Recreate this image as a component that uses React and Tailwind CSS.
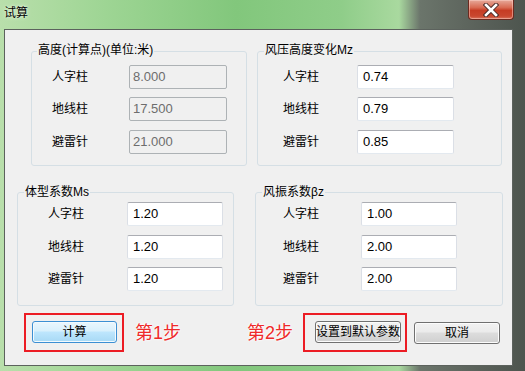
import React from "react";

const font = "font-['Liberation_Sans','Noto_Sans_CJK_SC',sans-serif]";

function Field({ label, value, labelW, inputW, disabled, mt }) {
  return (
    <div className={`flex items-center ${mt}`}>
      <div className={`${labelW} text-[12px] leading-[14px] text-black`}>{label}</div>
      <div
        className={
          disabled
            ? `${inputW} h-[24px] flex items-center pl-[3px] rounded-[2px] border border-[#adb2b5] bg-[#f0f0f0] text-[13px] text-[#6d6d6d]`
            : `${inputW} h-[24px] flex items-center pl-[5px] rounded-[2px] border border-[#dbdfe6] border-t-[#abadb3] border-b-[#e3e9ef] bg-white text-[13px] text-black`
        }
      >
        {value}
      </div>
    </div>
  );
}

function Group({ title, w, h, pl, pt, labelW, inputW, values, disabled, titleTop, titleLeft, gaps }) {
  const labels = ["人字柱", "地线柱", "避雷针"];
  return (
    <div className={`relative ${w} ${h} ${pl} ${pt} border border-[#d5dfe5] rounded-[3px] shrink-0`}>
      <div className={`absolute ${titleTop} ${titleLeft} px-[1px] bg-[#f0f0f0] text-[12px] leading-[14px] text-black whitespace-nowrap`}>
        {title}
      </div>
      {labels.map((l, i) => (
        <Field
          key={l}
          label={l}
          value={values[i]}
          labelW={labelW}
          inputW={inputW}
          disabled={disabled}
          mt={gaps[i]}
        />
      ))}
    </div>
  );
}

function WinButton({ children, blue, w }) {
  return (
    <div
      className={
        blue
          ? `${w} h-[22px] shrink-0 flex items-center justify-center rounded-[3px] border border-[#3c8fd3] bg-[linear-gradient(to_bottom,#eaf6fd_0%,#d9f0fc_45%,#bee6fd_50%,#a7d9f5_100%)] shadow-[inset_0_0_0_1px_#f3fafe] text-[12px] text-black`
          : `${w} h-[22px] shrink-0 flex items-center justify-center rounded-[3px] border border-[#707070] bg-[linear-gradient(to_bottom,#f2f2f2_0%,#ebebeb_45%,#dddddd_50%,#cfcfcf_100%)] shadow-[inset_0_0_0_1px_#fcfcfc] text-[12px] text-black whitespace-nowrap`
      }
    >
      {children}
    </div>
  );
}

export default function App() {
  return (
    <div
      className={`${font} w-[525px] h-[371px] overflow-hidden flex flex-col bg-[linear-gradient(to_right,#b9dfab_0%,#9ed594_20%,#82c77c_45%,#8fcd89_65%,#a9d99f_76%,#6b756b_80%,#596059_92%,#4d554e_100%)]`}
    >
      {/* title bar */}
      <div className="h-[29px] flex items-start shrink-0">
        <div className="pl-[4px] pt-[6px] text-[12px] leading-[14px] text-black [text-shadow:0_0_4px_#e6f5e0,0_0_2px_#e6f5e0]">
          试算
        </div>
        <div className="ml-auto mr-[11px] w-[46px] h-[20px] rounded-b-[4px] border border-t-0 border-[#6b2a20] bg-[linear-gradient(to_bottom,#e7a99a_0%,#d86a52_40%,#c63c24_55%,#c9472f_85%,#d9745e_100%)] flex items-center justify-center shadow-[inset_0_0_0_1px_rgba(255,220,210,0.45)]">
          <svg width="16" height="14" viewBox="0 0 16 14">
            <path d="M3 2 L13 12 M13 2 L3 12" stroke="#4a2a28" strokeWidth="4.5" strokeLinecap="square" fill="none" />
            <path d="M3 2 L13 12 M13 2 L3 12" stroke="#ffffff" strokeWidth="2.6" strokeLinecap="square" fill="none" />
          </svg>
        </div>
      </div>

      {/* client area */}
      <div className="ml-[4px] w-[509px] h-[337px] border border-[#5c625d] bg-[#f0f0f0] flex flex-col shrink-0">
        {/* row 1 */}
        <div className="flex mt-[21px] ml-[26px]">
          <Group
            title="高度(计算点)(单位:米)"
            w="w-[216px]"
            h="h-[115px]"
            pl="pl-[20px]"
            pt="pt-[13px]"
            labelW="w-[77px]"
            inputW="w-[98px]"
            values={["8.000", "17.500", "21.000"]}
            disabled
            titleTop="top-[-9px]"
            titleLeft="left-[5px]"
            gaps={["", "mt-[8px]", "mt-[9px]"]}
          />
          <div className="ml-[10px]">
            <Group
              title="风压高度变化Mz"
              w="w-[245px]"
              h="h-[115px]"
              pl="pl-[25px]"
              pt="pt-[13px]"
              labelW="w-[74px]"
              inputW="w-[97px]"
              values={["0.74", "0.79", "0.85"]}
              titleTop="top-[-9px]"
              titleLeft="left-[6px]"
              gaps={["", "mt-[8px]", "mt-[9px]"]}
            />
          </div>
        </div>

        {/* row 2 */}
        <div className="flex mt-[26px] ml-[12px]">
          <Group
            title="体型系数Ms"
            w="w-[217px]"
            h="h-[114px]"
            pl="pl-[30px]"
            pt="pt-[9px]"
            labelW="w-[79px]"
            inputW="w-[96px]"
            values={["1.20", "1.20", "1.20"]}
            titleTop="top-[-8px]"
            titleLeft="left-[6px]"
            gaps={["", "mt-[9px]", "mt-[8px]"]}
          />
          <div className="ml-[21px]">
            <Group
              title="风振系数βz"
              w="w-[248px]"
              h="h-[114px]"
              pl="pl-[27px]"
              pt="pt-[9px]"
              labelW="w-[78px]"
              inputW="w-[96px]"
              values={["1.00", "2.00", "2.00"]}
              titleTop="top-[-8px]"
              titleLeft="left-[6px]"
              gaps={["", "mt-[9px]", "mt-[8px]"]}
            />
          </div>
        </div>

        {/* row 3 */}
        <div className="flex items-center mt-[7px] ml-[19px]">
          <div className="w-[100px] h-[39px] border-2 border-[#ec1c24] pl-[6px] pt-[6px] shrink-0">
            <WinButton blue w="w-[85px]">计算</WinButton>
          </div>
          <div className="ml-[11px] w-[46px] text-[18px] leading-[20px] text-[#ee2a2a] [text-shadow:0_0_3px_#fff,0_0_2px_#fff,0_0_1px_#fff] whitespace-nowrap">
            第1步
          </div>
          <div className="ml-[66px] w-[46px] text-[18px] leading-[20px] text-[#ee2a2a] [text-shadow:0_0_3px_#fff,0_0_2px_#fff,0_0_1px_#fff] whitespace-nowrap">
            第2步
          </div>
          <div className="ml-[10px] w-[104px] h-[39px] border-2 border-[#ec1c24] pl-[10px] pt-[6px] shrink-0">
            <WinButton w="w-[86px]">设置到默认参数</WinButton>
          </div>
          <div className="ml-[7px]">
            <WinButton w="w-[86px]">取消</WinButton>
          </div>
        </div>
      </div>
    </div>
  );
}
